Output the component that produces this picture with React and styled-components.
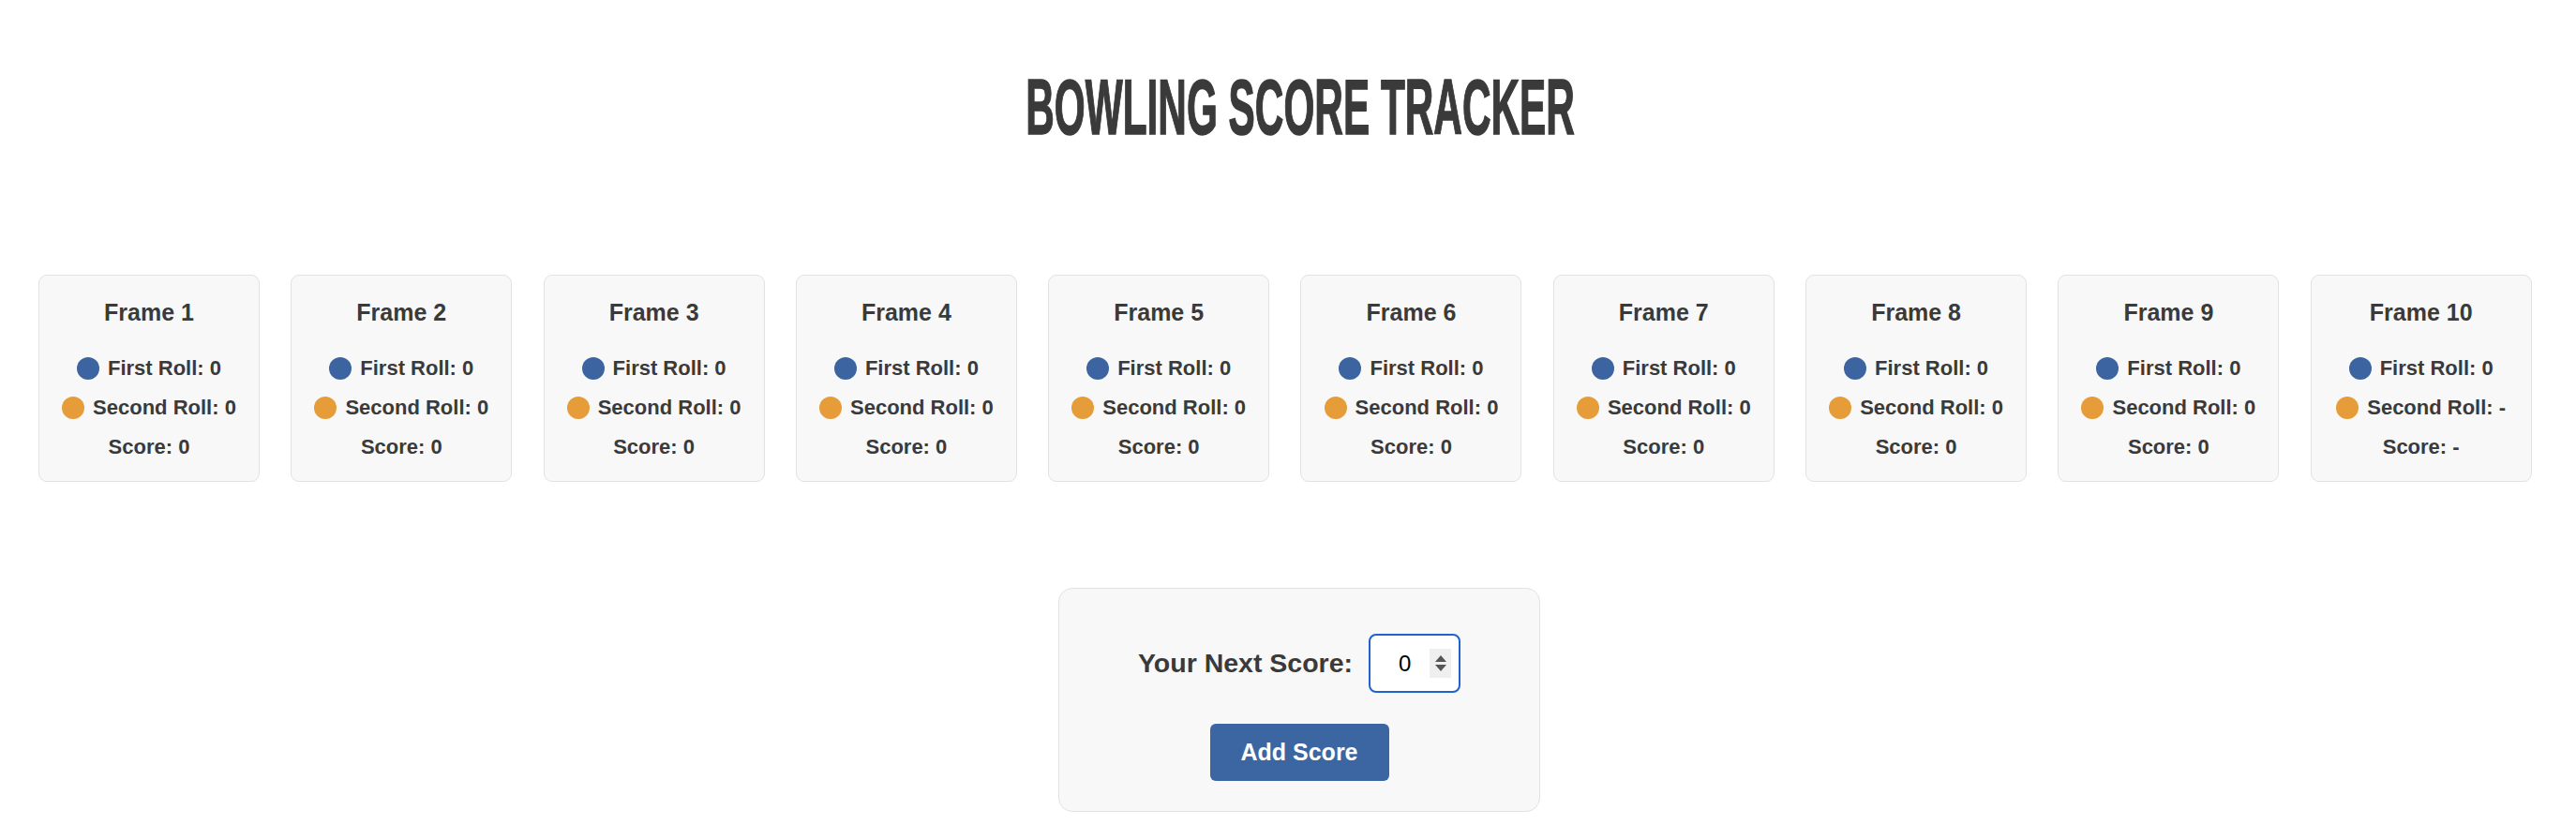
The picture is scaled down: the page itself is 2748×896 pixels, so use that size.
import React, { useState } from "react";
import styled, { createGlobalStyle } from "styled-components";

const GlobalStyle = createGlobalStyle`
  body {
    margin: 0;
    background: #fff;
    color: #3a3a3a;
    font-family: "Liberation Sans", Arial, sans-serif;
  }
`;

const Page = styled.div`
  padding-top: 73px;
`;

const Title = styled.h1`
  margin: 0;
  padding-left: 26px;
  text-align: center;
  font-size: 83px;
  line-height: 1;
  font-weight: 700;
  text-transform: uppercase;
  color: #3a3a3a;

  span {
    display: inline-block;
    transform: scaleX(0.51);
    transform-origin: center;
    -webkit-text-stroke: 1.5px #3a3a3a;
  }
`;

const Frames = styled.div`
  display: flex;
  gap: 33.3px;
  padding-left: 41px;
  margin-top: 137px;
`;

const Card = styled.div`
  box-sizing: border-box;
  width: 236px;
  height: 221px;
  flex-shrink: 0;
  display: flex;
  flex-direction: column;
  align-items: center;
  padding: 24px 0 15px;
  background: #f8f8f8;
  border: 1px solid #e2e2e2;
  border-radius: 9px;
`;

const FrameName = styled.h3`
  margin: 0 0 24px;
  font-size: 25px;
  line-height: 30px;
  font-weight: 700;
`;

const Row = styled.div`
  display: flex;
  align-items: center;
  justify-content: center;
  gap: 9px;
  height: 42px;
  font-size: 22px;
  font-weight: 700;
`;

const Dot = styled.span`
  width: 24px;
  height: 24px;
  border-radius: 50%;
  background: ${(p) => p.$color};
`;

const PanelWrap = styled.div`
  display: flex;
  justify-content: center;
  padding-left: 24px;
  margin-top: 113px;
`;

const Panel = styled.div`
  display: flex;
  flex-direction: column;
  align-items: center;
  padding: 48px 84px 32px;
  background: #f8f8f8;
  border: 1px solid #e2e2e2;
  border-radius: 15px;
`;

const InputRow = styled.div`
  display: flex;
  align-items: center;
  gap: 17px;
`;

const Label = styled.label`
  font-size: 28.5px;
  font-weight: 700;
`;

const InputBox = styled.div`
  box-sizing: border-box;
  width: 98px;
  height: 63px;
  display: flex;
  align-items: center;
  padding: 0 8px 0 10px;
  border: 2px solid #1f62d0;
  border-radius: 8px;
  background: #fff;
`;

const NumberInput = styled.input`
  flex: 1;
  min-width: 0;
  padding: 0;
  border: none;
  background: transparent;
  font-family: "Liberation Sans", Arial, sans-serif;
  font-size: 24px;
  color: #000;
  text-align: center;
  outline: none;
  -moz-appearance: textfield;

  &::-webkit-inner-spin-button,
  &::-webkit-outer-spin-button {
    -webkit-appearance: none;
    margin: 0;
  }
`;

const Spinner = styled.div`
  width: 23px;
  height: 31px;
  display: flex;
  flex-direction: column;
  align-items: center;
  justify-content: center;
  gap: 3px;
  background: #efefef;
`;

const Arrow = styled.span`
  width: 0;
  height: 0;
  border-left: 6px solid transparent;
  border-right: 6px solid transparent;
  ${(p) =>
    p.$up
      ? "border-bottom: 7px solid #555;"
      : "border-top: 7px solid #555;"}
`;

const AddButton = styled.button`
  margin-top: 33px;
  width: 191px;
  height: 61px;
  border: none;
  border-radius: 6px;
  background: #3c66a2;
  color: #fff;
  font-family: "Liberation Sans", Arial, sans-serif;
  font-size: 25px;
  font-weight: 700;
  cursor: pointer;
`;

const frames = Array.from({ length: 10 }, (_, i) => ({
  n: i + 1,
  first: "0",
  second: i === 9 ? "-" : "0",
  score: i === 9 ? "-" : "0",
}));

export default function App() {
  const [next, setNext] = useState(0);
  const step = (d) =>
    setNext((v) => Math.max(0, Math.min(10, Number(v) + d)));
  return (
    <Page>
      <GlobalStyle />
      <Title>
        <span>Bowling Score Tracker</span>
      </Title>
      <Frames>
        {frames.map((f) => (
          <Card key={f.n}>
            <FrameName>Frame {f.n}</FrameName>
            <Row>
              <Dot $color="#3b64a0" />
              First Roll: {f.first}
            </Row>
            <Row>
              <Dot $color="#e69c38" />
              Second Roll: {f.second}
            </Row>
            <Row>Score: {f.score}</Row>
          </Card>
        ))}
      </Frames>
      <PanelWrap>
        <Panel>
          <InputRow>
            <Label htmlFor="next">Your Next Score:</Label>
            <InputBox>
              <NumberInput
                id="next"
                type="number"
                min="0"
                max="10"
                value={next}
                onChange={(e) => setNext(e.target.value)}
              />
              <Spinner>
                <Arrow $up onClick={() => step(1)} />
                <Arrow onClick={() => step(-1)} />
              </Spinner>
            </InputBox>
          </InputRow>
          <AddButton>Add Score</AddButton>
        </Panel>
      </PanelWrap>
    </Page>
  );
}
